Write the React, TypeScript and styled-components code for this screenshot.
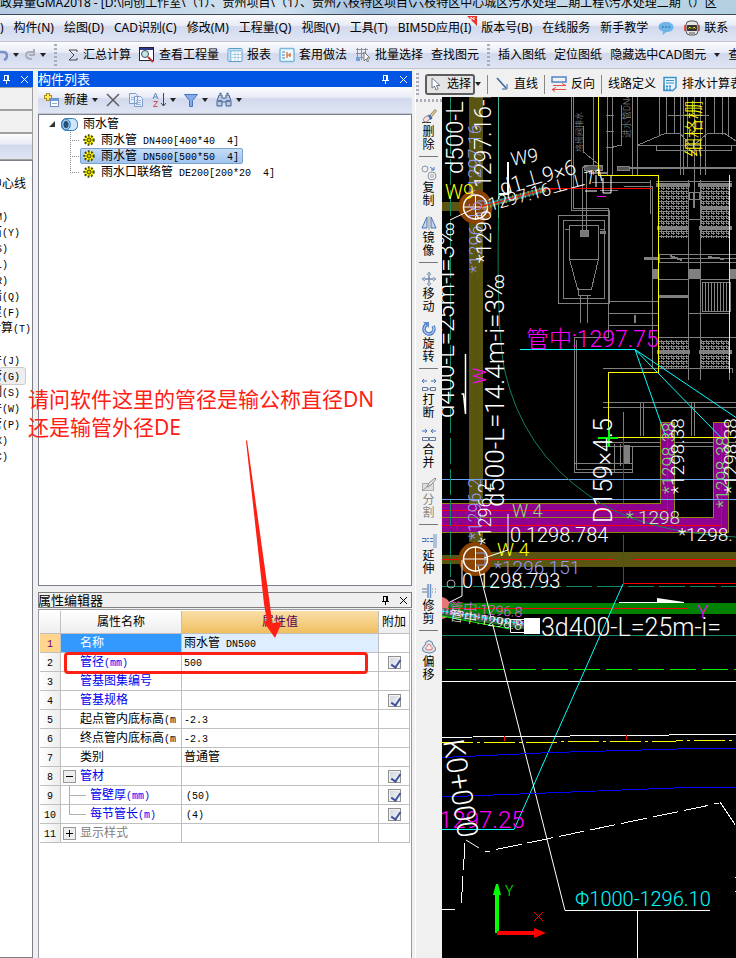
import React from "react";
import styled, { createGlobalStyle, css } from "styled-components";

const GlobalStyle = createGlobalStyle`
  * { box-sizing: border-box; }
  body { margin: 0; background: #f0f0f0; }
  button { font: inherit; color: inherit; border: 0; padding: 0; background: none; white-space: nowrap; }
`;

const ui = `"Noto Sans", "Noto Sans CJK SC", sans-serif`;
const barFill = "linear-gradient(#fbfcfe, #e8ebf6 40%, #d2d9ed 45%, #dfe5f3)";

const Page = styled.div`
  position: relative;
  display: flex;
  flex-direction: column;
  height: 100vh;
  overflow: hidden;
  background: #f0f0f0;
  color: #000;
  font: 12px/16px ${ui};
`;

const TitleBar = styled.header`
  height: 15px;
  flex: none;
  display: flex;
  align-items: flex-end;
  overflow: hidden;
  white-space: nowrap;
  padding-bottom: 3px;
  border-bottom: 1px solid #3d4756;
  background: linear-gradient(90deg, #b5cbe3, #d3e2ee 38%, #a2bfdd 50%, #c6dbe8 75%, #b3cfe0);
`;

const Strip = styled.div<{ $fill?: string }>`
  height: 27px;
  flex: none;
  display: flex;
  align-items: center;
  white-space: nowrap;
  overflow: hidden;
  background: ${(p) => p.$fill || barFill};
  border-bottom: 1px solid #c0c4cf;
`;

const MenuStrip = styled(Strip)`
  gap: 10px;
`;

const ToolStrip = styled(Strip)`
  gap: 8px;
`;

const PanelTools = styled(Strip)`
  gap: 8px;
  padding-left: 4px;
`;

const Cluster = styled.div<{ $tight?: boolean }>`
  display: flex;
  align-items: center;
  flex: none;
  gap: ${(p) => (p.$tight ? "0" : "5px")};
`;

const ToolButton = styled.button<{ $on?: boolean }>`
  display: flex;
  align-items: center;
  gap: 4px;
  flex: none;
  ${(p) =>
    p.$on &&
    css`
      height: 21px;
      padding-right: 2px;
      border: 2px solid #5d5d5d;
      border-radius: 3px;
      background: #e4e4e4;
    `}
`;

const MenuButton = styled.button`
  position: relative;
  flex: none;
`;

const NewFlag = styled.svg`
  position: absolute;
  top: -4px;
  right: -6px;
`;

const Caret = styled.i`
  flex: none;
  border: 3px solid transparent;
  border-top: 4px solid #222;
  border-bottom: 0;
`;

const Grip = styled.i<{ $flat?: boolean }>`
  flex: none;
  width: ${(p) => (p.$flat ? "auto" : "3px")};
  height: ${(p) => (p.$flat ? "3px" : "22px")};
  background: repeating-linear-gradient(${(p) => (p.$flat ? "90deg" : "180deg")}, #a9adb6 0 2px, transparent 2px 4px);
`;

const Rule = styled.i`
  flex: none;
  width: 1px;
  height: 19px;
  background: #888;
`;

const Work = styled.main`
  flex: 1;
  min-height: 0;
  display: flex;
  padding-top: 2px;
`;

const LeftDock = styled.aside`
  flex: none;
  width: 33px;
  display: flex;
  flex-direction: column;
  margin-right: 5px;
`;

const DockTitle = styled.div<{ $plain?: boolean }>`
  flex: none;
  height: 16px;
  display: flex;
  align-items: center;
  justify-content: flex-end;
  gap: 9px;
  padding-right: 4px;
  background: ${(p) => (p.$plain ? "#f0f0f0" : "#0054e3")};
  color: ${(p) => (p.$plain ? "#000" : "#fff")};
  outline: ${(p) => (p.$plain ? "1px solid #808080" : "none")};
  outline-offset: -1px;
  h2 { margin: 0 auto 0 0; font: inherit; font-size: 13px; line-height: 16px; }
`;

const LeftPane = styled.div<{ $tall?: number; $fill?: string }>`
  flex: none;
  height: ${(p) => p.$tall}px;
  border: 1px solid #a0a0a0;
  border-left: 0;
  background: ${(p) => p.$fill || "#f0f0f0"};
`;

const CommandList = styled.ul`
  flex: 1;
  margin: 0;
  padding: 15px 0 0;
  list-style: none;
  overflow: hidden;
  background: #fff;
  border: 1px solid #7b7f88;
  border-left: 0;
`;

const Command = styled.li<{ $inset: number; $hot?: boolean }>`
  height: 16px;
  display: flex;
  justify-content: flex-end;
  white-space: nowrap;
  padding-right: ${(p) => p.$inset}px;
  ${(p) => p.$hot && css`
    margin-right: 7px;
    padding-right: 5px;
    background: #eee;
    outline: 1px solid #ccc;
    border-radius: 2px;
  `}
`;

const MiddleDock = styled.section`
  flex: none;
  width: 374px;
  display: flex;
  flex-direction: column;
`;

const TreeBox = styled.div`
  flex: 1;
  min-height: 0;
  background: #fff;
  border: 1px solid #7b7f92;
  padding: 1px 8px;
  margin-bottom: 6px;
`;

const TreeRow = styled.div<{ $root?: boolean }>`
  display: flex;
  align-items: center;
  height: 16px;
  gap: ${(p) => (p.$root ? "5px" : "0")};
  padding-left: ${(p) => (p.$root ? "1px" : "23px")};
  white-space: pre;
`;

const Branch = styled.i<{ $last?: boolean }>`
  width: 10px;
  height: 16px;
  flex: none;
  background:
    linear-gradient(90deg, #888 50%, transparent 50%) 0 8px / 2px 1px repeat-x,
    repeating-linear-gradient(#888 0 1px, transparent 1px 2px) 0 0 / 1px ${(p) => (p.$last ? "9px" : "16px")} no-repeat;
`;

const TreeLabel = styled.button<{ $on?: boolean }>`
  display: flex;
  align-items: center;
  gap: 6px;
  height: 16px;
  padding: 0 3px 0 2px;
  white-space: pre;
  border: 1px solid transparent;
  border-radius: 2px;
  ${(p) => p.$on && css`
    background: linear-gradient(#c5dcf7, #a0c4f0);
    border-color: #7da2ce;
  `}
`;

const Mono = styled.span`
  font: 10px/10px "Liberation Mono", monospace;
`;

const Editor = styled.section`
  flex: 0 0 366px;
`;

const GridBox = styled.div`
  position: relative;
  height: 349px;
  margin-top: 1px;
  padding: 1px 1px 0 1px;
  background: #fff;
  border: 1px solid #9a9aa0;
  border-bottom: 0;
`;

const Grid = styled.table`
  width: 100%;
  table-layout: fixed;
  border-spacing: 0;
  th, td {
    height: 19px;
    padding: 0;
    border-right: 1px solid #c0c0c0;
    border-bottom: 1px solid #c0c0c0;
    overflow: hidden;
    white-space: nowrap;
    line-height: 16px;
    font-weight: 400;
  }
  thead th { height: 23px; background: linear-gradient(#fff, #eeeeee); }
  col:nth-child(1) { width: 21px; }
  col:nth-child(2) { width: 121px; }
  col:nth-child(4) { width: 31px; }
`;

const ValueHead = styled.th`
  && { background: linear-gradient(#fadfa8, #efbf60); color: #580058; }
`;

const Num = styled.th<{ $on?: boolean }>`
  background: ${(p) => (p.$on ? "#ffd58d" : "linear-gradient(90deg, #fff, #ececec)")};
  color: ${(p) => (p.$on ? "#700070" : "#000")};
`;

const NameCell = styled.td<{ $tone: string; $on?: boolean }>`
  color: ${(p) => (p.$on ? "#fff" : p.$tone)};
  background: ${(p) => (p.$on ? "#3399ff" : "#fff")};
`;

const NameInner = styled.div`
  display: flex;
  align-items: center;
  height: 18px;
  overflow: hidden;
  padding-left: 2px;
`;

const NameGutter = styled.span<{ $deep?: boolean }>`
  flex: none;
  width: ${(p) => (p.$deep ? "27px" : "17px")};
  height: 18px;
  display: flex;
  align-items: center;
`;

const ValueCell = styled.td<{ $on?: boolean; $indent?: boolean }>`
  background: ${(p) => (p.$on ? "#deeeff" : "#fff")};
  && { padding-left: ${(p) => (p.$indent ? "4px" : "2px")}; }
`;

const Fold = styled.button`
  width: 13px;
  height: 13px;
  border: 1px solid #999;
  background: #eee;
  display: grid;
  place-items: center;
`;

const CheckCell = styled.td`
  text-align: center;
`;

const Check = styled.input`
  appearance: none;
  position: relative;
  display: block;
  width: 13px;
  height: 13px;
  margin: 0 auto;
  border: 1px solid #8e8f8f;
  background: linear-gradient(135deg, #ccd2da, #fafafa);
  box-shadow: inset 0 0 0 1px #f4f4f4;
  &:checked::after {
    content: "";
    position: absolute;
    left: 4px;
    top: 1px;
    width: 4px;
    height: 8px;
    border: solid #3d539c;
    border-width: 0 2px 2px 0;
    transform: rotate(35deg);
  }
`;

const RedFrame = styled.div`
  position: absolute;
  top: 42px;
  left: 25px;
  right: 43px;
  height: 22px;
  border: 3px solid #ff2015;
  border-radius: 4px;
`;

const DrawDock = styled.section`
  flex: 1;
  min-width: 0;
  display: flex;
  flex-direction: column;
  margin-left: 3px;
  border-left: 1px solid #fff;
`;

const DrawBar = styled(Strip)`
  height: 26px;
  border: 0;
  gap: 6px;
`;

const DrawRow = styled.div`
  flex: 1;
  min-height: 0;
  display: flex;
`;

const SideTools = styled.nav`
  flex: none;
  width: 26px;
  display: flex;
  flex-direction: column;
  padding-top: 2px;
`;

const SideGroup = styled.div`
  & + & { margin-top: 4px; border-top: 1px solid #777; padding-top: 1px; }
  margin-right: 4px;
  margin-left: 3px;
`;

const SideButton = styled.button<{ $off?: boolean }>`
  display: flex;
  flex-direction: column;
  align-items: center;
  width: 100%;
  height: 50px;
  padding-top: 7px;
  color: ${(p) => (p.$off ? "#8a8a8a" : "#000")};
  span { width: 12px; line-height: 13px; white-space: normal; word-break: break-all; }
`;

const Canvas = styled.svg`
  display: block;
  flex: 1;
  min-width: 0;
  height: 100%;
  background: #000;
`;

const Note = styled.p`
  position: absolute;
  left: 28px;
  top: 385px;
  margin: 0;
  color: #ff2015;
  font-size: 21px;
  line-height: 28px;
  white-space: nowrap;
`;

const Arrow = styled.svg`
  position: absolute;
  left: 240px;
  top: 436px;
`;

/* Latin runs are set in the half-width face, ideographs in the full-width one. */
const Mixed = ({ text }: { text: string }) => (
  <span>
    {text.split(/([\x20-\x7e]+)/).map((t, i) => (i % 2 ? <Mono key={i}>{t}</Mono> : t))}
  </span>
);

type IconProps = { children: React.ReactNode; w?: number; vb?: string };
const Icon = ({ children, w = 16, vb }: IconProps) => (
  <svg width={w} height={16} viewBox={vb || `0 0 ${w} 16`} fill="none" aria-hidden="true">
    {children}
  </svg>
);

const Pin = () => (
  <svg width="9" height="10" viewBox="0 0 9 10" fill="none" stroke="currentColor" shapeRendering="crispEdges" aria-hidden="true">
    <path d="M2.5 1v5M2 1.5h4M1 6.5h7M4.5 7v3" /><path d="M6 1v5" strokeWidth="2" />
  </svg>
);
const Cross = () => (
  <svg width="9" height="9" viewBox="0 0 9 9" fill="none" stroke="currentColor" aria-hidden="true">
    <path d="M1 1l7 7M8 1l-7 7" />
  </svg>
);

const icons: Record<string, React.ReactNode> = {
  erase: <Icon><path d="M1 13.500h9" stroke="#333" /><path d="M9 6l5-5.500 1.500 1.500-5 6z" fill="#e6c878" stroke="#666" strokeWidth=".7" /><path d="M7 6.500l3.500 3.500" stroke="#3567b1" strokeWidth="3" /><ellipse cx="5.500" cy="10" rx="3.500" ry="2.500" transform="rotate(-45 5.500 10)" fill="#fbdde5" stroke="#777" strokeWidth=".8" /></Icon>,
  copy: <Icon><circle cx="4" cy="4" r="3" stroke="#8b94a3" /><circle cx="11" cy="11" r="4" stroke="#8b94a3" /><circle cx="11" cy="11" r="1.500" stroke="#8b94a3" strokeWidth=".7" /><path d="M9 2l4 3M13 2v3h-3" stroke="#4978c4" /></Icon>,
  mirror: <Icon><path d="M6 2v11H1z" fill="#c6d6ed" stroke="#4d77b5" /><path d="M10 2v11h5z" fill="#c6d6ed" stroke="#4d77b5" /><path d="M8 1v14" stroke="#999" /></Icon>,
  move: <Icon><path d="M8 2v12M2 8h12" stroke="#7087a8" strokeWidth="1.400" /><path d="M6 4l2-3 2 3M6 12l2 3 2-3M4 6L1 8l3 2M12 6l3 2-3 2" stroke="#7087a8" fill="#b9c7da" strokeWidth=".8" /></Icon>,
  rotate: <Icon><path d="M5 4a5 5 0 1 0 7 1" stroke="#3f6dba" strokeWidth="3.500" /><path d="M5 4a5 5 0 1 0 7 1" stroke="#a8c6f1" strokeWidth="1.500" /><path d="M2 1h6v6z" fill="#5a8ad2" /></Icon>,
  break: <Icon><path d="M1 4h5M3 2L1 4l2 2M15 4h-5M13 2l2 2-2 2" stroke="#4675bb" /><path d="M1.500 10.500h5v3h-5zM9.500 10.500h5v3h-5zM6.500 12h3" stroke="#63789c" /></Icon>,
  join: <Icon><path d="M1 4h5M4 2l2 2-2 2M15 4h-5M12 2l-2 2 2 2" stroke="#4675bb" /><path d="M1.500 10.500h6v3h-6zM8.500 10.500h6v3h-6z" stroke="#63789c" /></Icon>,
  split: <Icon><path d="M1.500 6.500h11v7h-11z" stroke="#aaa" fill="#ddd" /><path d="M1 14l6-5" stroke="#999" /><path d="M6 10l2-4 6-5 1 1-5 6z" fill="#eee" stroke="#888" /></Icon>,
  extend: <Icon><path d="M13 1v14M15 1v14" stroke="#6c92c7" /><path d="M1 5.500h4v3H1M6 5.500h2M6 8.500h2M9 5.500h3M9 8.500h3" stroke="#4675bb" /></Icon>,
  trim: <Icon><path d="M7 1v14M9.500 1v14" stroke="#6c92c7" strokeWidth="1.500" /><path d="M1 6h5M1 9h5M11 6h1M14 6h1M11 9h1M14 9h1" stroke="#63789c" /></Icon>,
  offset: <Icon><path d="M5 3q3-3 6 0l1 3q4 3 2 6-3 2-6 2-3 0-6-2-2-3 2-6z" stroke="#68819f" fill="#dbe4ef" /><path d="M6.500 6q1.500-2 3 0l.5 1.500q2 1 1 3-3 1-6 0-1-2 1-3z" stroke="#e06b6b" fill="#fbeaea" /></Icon>,
};

const sideGroups: [string, string, boolean?][][] = [
  [["erase", "删除"]],
  [["copy", "复制"], ["mirror", "镜像"]],
  [["move", "移动"], ["rotate", "旋转"]],
  [["break", "打断"], ["join", "合并"], ["split", "分割", true]],
  [["extend", "延伸"], ["trim", "修剪"]],
  [["offset", "偏移"]],
];

const commands: [string, number, boolean?][] = [
  ["中心线", 6], ["", 0], ["(M)", 24], ["石(Y)", 12], ["(S)", 24], ["(L)", 24], ["(R)", 24], ["墙(Q)", 12],
  ["屋(F)", 12], ["计算(T)", 1], ["", 0], ["件(J)", 12], ["管(G)", 12, true], ["制(S)", 12], ["件(W)", 12],
  ["管(P)", 12], ["(X)", 24], ["(C)", 24],
];

const menus = ["构件(N)", "绘图(D)", "CAD识别(C)", "修改(M)", "工程量(Q)", "视图(V)", "工具(T)", "BIM5D应用(I)", "版本号(B)", "在线服务", "新手教学"];

type Row = { name: string; value?: string; tone?: string; check?: boolean; deep?: "mid" | "end"; fold?: "-" | "+" };
const rows: Row[] = [
  { name: "名称", value: "雨水管 DN500" },
  { name: "管径(mm)", value: "500", check: true },
  { name: "管基图集编号" },
  { name: "管基规格", check: true },
  { name: "起点管内底标高(m", value: "-2.3", tone: "#000" },
  { name: "终点管内底标高(m", value: "-2.3", tone: "#000" },
  { name: "类别", value: "普通管", tone: "#000" },
  { name: "管材", check: true, fold: "-" },
  { name: "管壁厚(mm)", value: "(50)", check: true, deep: "mid" },
  { name: "每节管长(m)", value: "(4)", check: true, deep: "end" },
  { name: "显示样式", tone: "#808080", fold: "+" },
];

const Gear = () => (
  <svg width="12" height="12" viewBox="0 0 12 12" aria-hidden="true">
    <circle cx="6" cy="6" r="4.700" fill="#ff0" stroke="#4a4500" strokeWidth="2" strokeDasharray="1.800 1.600" />
    <circle cx="6" cy="6" r="3.500" fill="#ff0" />
    <path d="M6 2v8M2 6h8M3.300 3.300l5.400 5.400M8.700 3.300L3.300 8.700" stroke="#4a4500" strokeWidth=".8" />
    <circle cx="6" cy="6" r="1.500" fill="#ff0" stroke="#4a4500" strokeWidth=".8" />
  </svg>
);

type CadProps = { x: number; y: number; s?: number; c?: string; r?: number; children: React.ReactNode };
const CadText = ({ x, y, s = 20, c = "#fff", r = 0, children }: CadProps) => (
  <text x={x} y={y} fontSize={s} fill={c} transform={r ? `rotate(${r} ${x} ${y})` : undefined}>{children}</text>
);

const Drawing = () => (
  <Canvas viewBox="442 97 294 861" preserveAspectRatio="xMinYMin slice" fill="none" fontFamily={`Roboto, "Noto Sans CJK SC", sans-serif`} fontWeight={300} role="img" aria-label="污水管网图">
    <defs>
      <pattern id="mesh" width="5" height="5" patternUnits="userSpaceOnUse">
        <path d="M0 1.500h5M1.500 0v4M3.500 1v4M2 3.500h3" stroke="#858585" shapeRendering="crispEdges" />
      </pattern>
      <pattern id="bars" width="3" height="5" patternUnits="userSpaceOnUse">
        <path d="M.5 0v5" stroke="#858585" />
      </pattern>
    </defs>
    <g stroke="#808080" shapeRendering="crispEdges">
      <path d="M571.500 97v113h38v33M573.500 97v111h35v129h-34v126h58M608.500 210v93M574.500 337v135h58v-25M576.500 340v129h56" />
      <path d="M593.500 97v78M607.500 97v78M612.500 97v78M606 115.500h8M606 131.500h8M606 147.500h8M632.500 97v78M637.500 97v78M659.500 97v39M666.500 97v36M674.500 97v36M705.500 97v36M714.500 97v36M722.500 97v38M728.500 97v38M680.500 97v78M683.500 97v78M687.500 97v70M694.500 97v100M700.500 97v78M705.500 97v78" />
      <path d="M638 145.500h98M638 145l28-12h14l10 12M694 145l14-12h16l12 8M656.500 146v4h75v-4M618 167.500h118M618 168.500h118M668 115.500h41" />
      <path d="M617 166h12v4h-12zM584 165h18v5h-18z" fill="#555" />
      <path d="M582 170v65M586 170v65M582 170q0-4 6-4M558.500 215.500h51v88h-51zM563.500 220.500h41v78h-41zM569.500 225.500h29v34h-29zM569.500 259l8 30h14l7-30M578 288v7h13M580.500 295v28M587.500 295v28M565 229h4M600 229h4" />
      <path d="M580 230h8v6h-8zM600 231h5v2h-5z" fill="#777" />
      <path d="M583.500 126v26l18 15M621.500 105v40l-9 2" />
      <path d="M592 182.500h58v9M600 190.500h18M624 186.500h28v110M650.500 180v34M652.500 235v132M658.500 180v190M688.500 180v200M700.500 180v200M729.500 180v200M656 181.500h76M688 219.500h12M658 279.500h30M658 297.500h30M700 279.500h30M688 313.500h42M658 337.500h78M609 301.500h50M608 313.500h50M608 325.500h50" />
      <path d="M602.500 402.500h134v5h-134M640.500 402v34M643.500 402v34M691.500 402v34M694.500 402v34M602 442.500h134M602 446.500h134M602.500 368h130v5M614.500 444v28M620.500 444v22" />
    </g>
    <g shapeRendering="crispEdges">
      <path d="M659 184h29v54h-29zM701 184h29v54h-29zM659 340h29v28h-29zM701 340h29v28h-29z" fill="url(#mesh)" />
      <path d="M656 183h34v4h-34zM698 183h34v4h-34zM657 226h32v4h-32zM699 226h33v4h-33zM657 350h33v4h-33zM699 350h33v4h-33zM658 295h30v3h-30zM700 207h30v3h-30zM653 269h5v10h-5zM688 269h12v10h-12zM730 269h6v10h-6zM624 445h6v18h-6zM644 257h14v3h-14z" fill="#808080" />
      <path d="M659 254.500h77v8h-77zM659 258.500h77" stroke="#808080" />
      <path d="M670 256l12 4M708 257l16 2" stroke="#808080" strokeWidth="2" />
      <path d="M702 282h28v29h-28z" fill="url(#bars)" stroke="#808080" />
      <path d="M689 192h10v7h-10z" stroke="#808080" />
      <path d="M694 192v16M635 315v8" stroke="#808080" strokeWidth="2" />
      <path d="M623 412v40" stroke="#808080" />
    </g>
    <g shapeRendering="crispEdges">
      <path d="M469 97h14v445h-14zM442 202h20v9h-20zM483 552h253v15H483zM442 555h20v9h-20z" fill="#5a5510" />
      <path d="M442 503.500h218v-81h14v95h39v-95h15v110H442z" fill="#900090" />
      <path d="M442 503.500h218v-81h14v95H442M442 517.500h271v-95h15v110H442" stroke="#8e8610" />
      <path d="M442 603h294v11H442z" fill="#008200" />
      <path d="M475.500 97v455M442 510.500h225v-88M442 525.500h279v-103M442 559.500h171M633 559.500h103M442 608.500h246M623.500 440v63M623.500 535v48.500h112.500M545 188.500h107" stroke="#f00" />
      <path d="M442 479.500h294M442 499.500h294" stroke="#6ba6f5" />
      <path d="M450.500 97v480M442 586.500h294" stroke="#108a6a" strokeDasharray="26 5" />
      <path d="M442 635.500h294" stroke="#108a6a" />
      <path d="M498.500 97v133" stroke="#45b89d" />
      <path d="M446 669.500h290" stroke="#00f000" strokeDasharray="26 6" />
      <path d="M442 681.500h294M619 602.500h65" stroke="#fff" />
      <path d="M598.500 97v78M598 175.500h60.500v197h-50v68M609 437.500h127M729.500 175v198" stroke="#ff0" />
      <path d="M598 437.500h20M608.500 427v20" stroke="#0f0" strokeWidth="2" />
    </g>
    <path d="M498.500 218q-2 110 6 152 18 80 85 126 50 36 147 41" stroke="#14805f" />
    <path d="M520 349.500h115l31 88M635 349.500l86 88M635 349.500l101 68M623 584L514 829.500h-72" stroke="#0ff" />
    <g>
      <circle cx="475.500" cy="207" r="17" fill="#8c4300" />
      <circle cx="475.500" cy="559" r="17" fill="#8c4300" />
      <circle cx="475.500" cy="207" r="12" stroke="#fff" strokeWidth="1.500" />
      <circle cx="475.500" cy="559" r="12" stroke="#fff" strokeWidth="1.500" />
      <path d="M463 207h25M475.500 195v25M463 559h25M475.500 547v25" stroke="#fff" />
      <path d="M477 201h8v12h-10M476 553h9v12h-9" stroke="#83a8ef" />
      <path d="M450 220l25-12" stroke="#fff" />
      <path d="M488 205l58-16" stroke="#2a7470" strokeWidth="5" />
      <path d="M482 207l64-18" stroke="#b5a633" strokeWidth="6" strokeDasharray="1 3" />
      <path d="M480 207l66-18h10" stroke="#f00" />
    </g>
    <CadText x={463} y={174} s={24} r={-90}>d500-L</CadText>
    <CadText x={491} y={188} s={23} r={-90}>1297.16-L</CadText>
    <CadText x={481} y={196} s={18} c="#9999ef" r={-90}>*1297.16</CadText>
    <CadText x={482} y={273} s={18} c="#9999ef" r={-90}>*1296.16</CadText>
    <CadText x={491} y={263} s={20} r={-90}>*1296</CadText>
    <CadText x={454} y={418} s={24} r={-90}>d400-L=25m-i=3‰</CadText>
    <CadText x={504} y={507} s={26} r={-90}>d500-L=14.4m-i=3‰</CadText>
    <CadText x={481} y={540} s={18} c="#9999ef" r={-90}>*1296.2</CadText>
    <CadText x={491} y={545} s={18} r={-90}>*1296.2</CadText>
    <CadText x={445} y={199} s={20} c="#ff0">W9</CadText>
    <CadText x={502} y={195} s={21} r={-16}>d1⊥9×6</CadText>
    <CadText x={512} y={166} s={19} r={-10}>W9</CadText>
    <CadText x={490} y={211} s={18} r={-15}>1297.16⊥⊥71</CadText>
    <path d="M508 162v32h-9" stroke="#fff" strokeWidth="2" />
    <path d="M596 175v12M603 178v15h8v-18M585 191h12M589 173h18" stroke="#fff" />
    <path d="M597 196.500h9" stroke="#f0f" />
    <path d="M465.500 354v60l-2-20h-2" stroke="#fff" strokeWidth="1.500" />
    <CadText x={701} y={157} s={19} c="#ff0" r={-90}>细格栅</CadText>
    <CadText x={582} y={152} s={8} c="#999" r={-90}>格栅间排水</CadText>
    <CadText x={630} y={138} s={9} c="#999" r={-90}>进水管DN400</CadText>
    <CadText x={526} y={347} s={23} c="#f0f">管中:1297.75</CadText>
    <CadText x={486} y={384} s={18} c="#f0f" r={-90}>W</CadText>
    <CadText x={612} y={523} s={25} r={-90}>D159×4.5</CadText>
    <CadText x={512} y={517} s={18} c="#88e070">W 4</CadText>
    <CadText x={497} y={556} s={19} c="#ff0">W 4</CadText>
    <CadText x={510} y={542} s={20}>0.1298.784</CadText>
    <CadText x={494} y={574} s={19} c="#9999ef">*1296.151</CadText>
    <CadText x={462} y={588} s={20}>0 1298.793</CadText>
    <CadText x={541} y={636} s={25}>3d400-L=25m-i=</CadText>
    <CadText x={626} y={524} s={18} c="#88e070">*</CadText>
    <CadText x={638} y={524} s={19} c="#c8f0c0">1298</CadText>
    <CadText x={678} y={541} s={19}>*1298.</CadText>
    <CadText x={675} y={494} s={18} c="#78e070" r={-90}>*1298.38</CadText>
    <CadText x={684} y={494} s={19} r={-90}>*1298.38</CadText>
    <CadText x={729} y={508} s={18} c="#78e070" r={-90}>*1298.38</CadText>
    <CadText x={737} y={494} s={19} r={-90}>*1298.38</CadText>
    <CadText x={697} y={618} s={19} c="#f0f">Y</CadText>
    <path d="M508 514v36l-24 8M478 566l87 344.500h145M637.500 910v48M462 560v36l-20 10" stroke="#fff" />
    <path d="M657 602v-4l27 4z" fill="#fff" />
    <g>
      <path d="M442 597q10 3 6 10 6 9-6 12z" fill="#e87878" />
      <path d="M442 612l88 14" stroke="#27662c" strokeWidth="8" />
      <path d="M442 611l88 14" stroke="#d47ed9" strokeWidth="5" strokeDasharray="2 2" />
      <path d="M442 611l88 14" stroke="#0ff" strokeDasharray="7 3" />
      <path d="M442 616l68 13" stroke="#0f0" />
      <path d="M510.500 619.500h14v13h-14z" stroke="#fff" />
      <path d="M524 618h16v16h-16z" fill="#fff" />
      <circle cx="451" cy="584" r="4" stroke="#aaa" />
    </g>
    <CadText x={449} y={612} s={14} c="#e070e0" r={4}>管中:1296.8</CadText>
    <CadText x={449} y={620} s={14} r={8}>管中:1298.8</CadText>
    <g shapeRendering="crispEdges">
      <path d="M442 737.500l62-1 132-1 100-1.500" stroke="#fff" />
      <path d="M442 743l294-2.500" stroke="#ff0" strokeDasharray="31 4 3 4" />
      <path d="M504.500 736v5M626.500 735v5" stroke="#f00" />
      <path d="M442 757.500l110-5 144-4 40 .500M442 797l232-9 62-.500" stroke="#00f" />
      <path d="M485 851.500h5M496 849.500l212-44" stroke="#fff" strokeDasharray="26 6" />
      <path d="M714 803.500h5M720 802l16 24M465 843l-4 66" stroke="#fff" strokeDasharray="27 6" />
      <path d="M442 909.500h13M735 877h1M735 891h1" stroke="#fff" />
    </g>
    <CadText x={439} y={828} s={24} c="#f0f">1297.25</CadText>
    <CadText x={443} y={741} s={29} r={81}>K0+000</CadText>
    <path d="M464 818l6 3M466 840l13 8" stroke="#fff" />
    <CadText x={575} y={906} s={20} c="#0ff">Φ1000-1296.10</CadText>
    <path d="M495 933v-38h-2l3-11h2l3 11h-2v38z" fill="#0f0" />
    <path d="M497 931h37v-3l12 5-12 5v-3h-37z" fill="#f00" />
    <CadText x={505} y={896} s={14} c="#0f0">Y</CadText>
    <path d="M534 912l9 9M543 912l-9 9" stroke="#f00" />
  </Canvas>
);

export default function App() {
  return (
    <Page>
      <GlobalStyle />
      <TitleBar>
        政算量GMA2018 - [D:\同创工作室\（1）、贵州项目\（1）、贵州六枝特区项目\六枝特区中心城区污水处理二期工程\污水处理二期（）区
      </TitleBar>
      <MenuStrip>
        <MenuButton>)</MenuButton>
        {menus.map((m) => (
          <MenuButton key={m}>
            {m}
            {m.startsWith("BIM") && (
              <NewFlag width="10" height="10" viewBox="0 0 10 10" aria-hidden="true">
                <path d="M0 0h10v10z" fill="#f0342c" /><path d="M4 4V1l3 3V1" stroke="#fff" fill="none" />
              </NewFlag>
            )}
          </MenuButton>
        ))}
        <ToolButton aria-label="消息">
          <Icon><path d="M8 2c4.500 0 7.500 2 7.500 5s-3 5-7 5l-4 3 .5-3.500C2 11 .5 9 .5 7c0-3 3-5 7.500-5z" fill="#6db5ea" /><path d="M4 7h1.500M7.300 7h1.500M10.600 7h1.500" stroke="#34719f" strokeWidth="1.500" /></Icon>
        </ToolButton>
        <ToolButton>
          <Icon><rect x="0" y="5" width="2" height="6" fill="#e8564c" /><rect x="14" y="5" width="2" height="6" fill="#e8564c" /><rect x="2" y="1" width="12" height="14" rx="4" fill="#e4e4e4" stroke="#555" /><rect x="3" y="5" width="10" height="6" rx="1" fill="#333" /><path d="M4.500 8.500l1.200-1.500 1.200 1.500M9 8.500l1.200-1.500 1.200 1.500" stroke="#ff0" /><path d="M5 13h6" stroke="#555" /></Icon>
          联系
        </ToolButton>
      </MenuStrip>
      <ToolStrip>
        <Cluster>
          <ToolButton aria-label="撤销"><Icon w={8} vb="6 0 8 16"><path d="M5 5h4q4 0 4 4 0 3-3 4" stroke="#7a8fc8" strokeWidth="2.500" /></Icon></ToolButton>
          <Caret />
          <ToolButton aria-label="重做"><Icon w={11}><path d="M8 12q-6 0-6-4 0-3 4-3h3M10 2v6H5" stroke="#a9aeba" strokeWidth="2" /></Icon></ToolButton>
          <Caret />
        </Cluster>
        <Grip />
        <ToolButton><Icon w={14}><path d="M12 5V3H4l5 5-5 5h8v-2" stroke="#444" /></Icon>汇总计算</ToolButton>
        <ToolButton><Icon><rect x=".5" y=".5" width="14" height="13" fill="#fff" stroke="#223" /><path d="M1 2h13" stroke="#2a3b8f" strokeWidth="2" /><circle cx="6" cy="7" r="3.500" fill="#bfe8e0" stroke="#446" /><path d="M9 10l5 5" stroke="#b33" strokeWidth="2" /></Icon>查看工程量</ToolButton>
        <ToolButton><Icon><rect x="1" y="1.500" width="14" height="13" rx="1" fill="#fff" stroke="#5a9cc8" /><path d="M2 3.500h12M3.500 3v11" stroke="#8cc6ea" strokeWidth="2" /><path d="M5 7.500h9M5 10.500h9M8 5v9M11 5v9" stroke="#a9cfe5" /></Icon>报表</ToolButton>
        <ToolButton><Icon><rect x="1" y="1.500" width="14" height="13" rx="1" fill="#eef8ff" stroke="#7ab7dc" strokeWidth="1.500" /><path d="M3 5h3M3 8h3M3 11h3" stroke="#3b84bd" /><path d="M8 5v6M8 8h4M11 6v4" stroke="#e08050" strokeWidth="1.500" /></Icon>套用做法</ToolButton>
        <ToolButton><Icon><path d="M1 2.500h12M1 6.500h8M1 10.500h7M2.500 1v12M6.500 1v12M10.500 1v5" stroke="#8a8f9c" /><rect x="1" y="10" width="4" height="4" fill="#7b9fd0" /><path d="M9 5v9l2-2 1.500 3 1-1-1.500-3h3z" fill="#fff" stroke="#777" /></Icon>批量选择</ToolButton>
        <ToolButton>查找图元</ToolButton>
        <Grip />
        <ToolButton>插入图纸</ToolButton>
        <ToolButton>定位图纸</ToolButton>
        <ToolButton>隐藏选中CAD图元</ToolButton>
        <Caret />
        <ToolButton>查</ToolButton>
      </ToolStrip>

      <Work>
        <LeftDock>
          <DockTitle><Pin /><Cross /></DockTitle>
          <LeftPane $tall={23} />
          <LeftPane $tall={23} />
          <LeftPane $tall={27} $fill={barFill} />
          <CommandList>
            {commands.map(([t, inset, hot], i) => (
              <Command key={i} $inset={inset} $hot={hot}><Mixed text={t} /></Command>
            ))}
          </CommandList>
        </LeftDock>

        <MiddleDock>
          <DockTitle><h2>构件列表</h2><Pin /><Cross /></DockTitle>
          <PanelTools>
            <ToolButton>
              <Icon w={18}><path d="M6 1v8M2 5h8" stroke="#a98a1f" strokeWidth="4" /><path d="M6 2v6M3 5h6" stroke="#ffe75c" strokeWidth="2" /><rect x="8.500" y="6.500" width="8" height="8" fill="#fff" stroke="#6c8fc0" /><path d="M9 8h7" stroke="#6c9be0" strokeWidth="2" /><path d="M10 11.500h5" stroke="#9ab" /></Icon>
              新建<Caret />
            </ToolButton>
            <ToolButton aria-label="删除"><Icon w={14}><path d="M1 2l12 12M13 2L1 14" stroke="#5e5e5e" strokeWidth="1.500" /></Icon></ToolButton>
            <ToolButton aria-label="复制"><Icon><path d="M1.500 1.500h6l2 2v8h-8zM6.500 4.500h6l2 2v8h-8z" fill="#e6effb" stroke="#7f9dcb" /><path d="M8 8.500h5M8 10.500h5M8 12.500h5M3 5.500h3M3 7.500h3" stroke="#9bb5dd" /></Icon></ToolButton>
            <ToolButton aria-label="排序"><Icon w={14}><path d="M1 7l2.500-6L6 7M2 5h3" stroke="#5f86c4" /><path d="M1.500 9.500h4l-4 5h4" stroke="#c0504d" /><path d="M11.500 1v13M9 11l2.500 3 2.500-3" stroke="#444" /></Icon><Caret /></ToolButton>
            <ToolButton aria-label="过滤"><Icon w={14}><path d="M.5 2.500h13l-5 6v6h-3v-6z" fill="#84abeb" stroke="#4775bd" /></Icon><Caret /></ToolButton>
            <ToolButton aria-label="查找"><Icon><path d="M3 3h3v3h4V3h3l2 6v5h-5v-4H6v4H1V9z" fill="#b6c8e2" stroke="#45628e" /><path d="M2 9h4M10 9h4M3.500 1.500h2M10.500 1.500h2" stroke="#45628e" strokeWidth="1.500" /></Icon><Caret /></ToolButton>
          </PanelTools>
          <TreeBox>
            <TreeRow $root>
              <svg width="8" height="8" aria-hidden="true"><path d="M7 1v6H1z" fill="#333" /></svg>
              <svg width="17" height="13" viewBox="0 0 17 13" aria-hidden="true"><rect x=".5" y=".5" width="16" height="12" rx="5" fill="#cfe7fb" stroke="#2c78b5" /><ellipse cx="5" cy="6.500" rx="4.300" ry="5.500" fill="#9cc8ee" stroke="#2c78b5" /><ellipse cx="5" cy="6.500" rx="2.500" ry="3.500" fill="#244f77" /></svg>
              <span>雨水管</span>
            </TreeRow>
            <TreeRow><Branch /><TreeLabel><Gear /><Mixed text="雨水管 DN400[400*40  4]" /></TreeLabel></TreeRow>
            <TreeRow><Branch /><TreeLabel $on><Gear /><Mixed text="雨水管 DN500[500*50  4]" /></TreeLabel></TreeRow>
            <TreeRow><Branch $last /><TreeLabel><Gear /><Mixed text="雨水口联络管 DE200[200*20  4]" /></TreeLabel></TreeRow>
          </TreeBox>

          <Editor>
            <DockTitle $plain><h2>属性编辑器</h2><Pin /><Cross /></DockTitle>
            <GridBox>
              <Grid>
                <colgroup><col /><col /><col /><col /></colgroup>
                <thead>
                  <tr><th /><th>属性名称</th><ValueHead>属性值</ValueHead><th>附加</th></tr>
                </thead>
                <tbody>
                  {rows.map((r, i) => (
                    <tr key={r.name}>
                      <Num scope="row" $on={i === 0}><Mono>{i + 1}</Mono></Num>
                      <NameCell $tone={r.tone || "#0000f0"} $on={i === 0}>
                        <NameInner>
                          <NameGutter $deep={!!r.deep}>
                            {r.fold && (
                              <Fold aria-label={r.name}>
                                <svg width="9" height="9" stroke="#000" shapeRendering="crispEdges" aria-hidden="true">
                                  <path d={r.fold === "-" ? "M1 4.500h7" : "M1 4.500h7M4.500 1v7"} />
                                </svg>
                              </Fold>
                            )}
                            {r.deep && (
                              <svg width="24" height="18" fill="none" stroke="#b0b0b0" shapeRendering="crispEdges" aria-hidden="true">
                                <path d={r.deep === "mid" ? "M6.500 0v18M7 9.500h16" : "M6.500 0v9.500h16"} />
                              </svg>
                            )}
                          </NameGutter>
                          <Mixed text={r.name} />
                        </NameInner>
                      </NameCell>
                      <ValueCell $on={i === 0} $indent={!!r.deep}>{r.value && <Mixed text={r.value} />}</ValueCell>
                      <CheckCell>{r.check && <Check type="checkbox" defaultChecked aria-label={r.name + "附加"} />}</CheckCell>
                    </tr>
                  ))}
                </tbody>
              </Grid>
              <RedFrame />
            </GridBox>
          </Editor>
        </MiddleDock>

        <DrawDock>
          <DrawBar $fill="#f0f0f0">
            <Grip />
            <Cluster $tight>
              <ToolButton $on><Icon><path d="M5 2v10l2.500-2 1.500 4 2-1-1.500-3.500H13z" fill="#fff" stroke="#6c7a92" /></Icon>选择</ToolButton>
              <Caret />
            </Cluster>
            <Rule />
            <ToolButton><Icon><path d="M3 2l9 10" stroke="#3d5f9c" strokeWidth="1.500" /><path d="M13 8v5H8" stroke="#3d5f9c" /></Icon>直线</ToolButton>
            <Rule />
            <ToolButton><Icon><rect x="1" y="1" width="14" height="5" stroke="#4f86cc" strokeWidth="1.500" /><path d="M2 9.500h13M11 7.500l4 2M15 13.500H1M5 11.500l-4 2 3 2" stroke="#e0524a" /></Icon>反向</ToolButton>
            <Rule />
            <ToolButton>线路定义</ToolButton>
            <ToolButton><Icon><path d="M2 1.500h12v10l-3 3H2z" fill="#e4f3fc" stroke="#3d94c9" strokeWidth="1.500" /><path d="M4 4.500h8M4 7h8" stroke="#3d94c9" /><path d="M1 10.500h9M1 13.500h8" stroke="#3d94c9" strokeWidth="2" strokeDasharray="2 1" /></Icon>排水计算表</ToolButton>
          </DrawBar>
          <DrawRow>
            <SideTools>
              <Grip $flat />
              {sideGroups.map((g, i) => (
                <SideGroup key={i}>
                  {g.map(([icon, label, off]) => (
                    <SideButton key={icon} $off={off} disabled={off}>{icons[icon]}<span>{label}</span></SideButton>
                  ))}
                </SideGroup>
              ))}
            </SideTools>
            <Drawing />
          </DrawRow>
        </DrawDock>
      </Work>

      <Note>请问软件这里的管径是输公称直径DN<br />还是输管外径DE</Note>
      <Arrow width="46" height="206" aria-hidden="true">
        <path d="M7 4l23 165 2 18 10-1-7 16-12-17h4l-3-17L6 5z" fill="#ff2015" />
      </Arrow>
    </Page>
  );
}
